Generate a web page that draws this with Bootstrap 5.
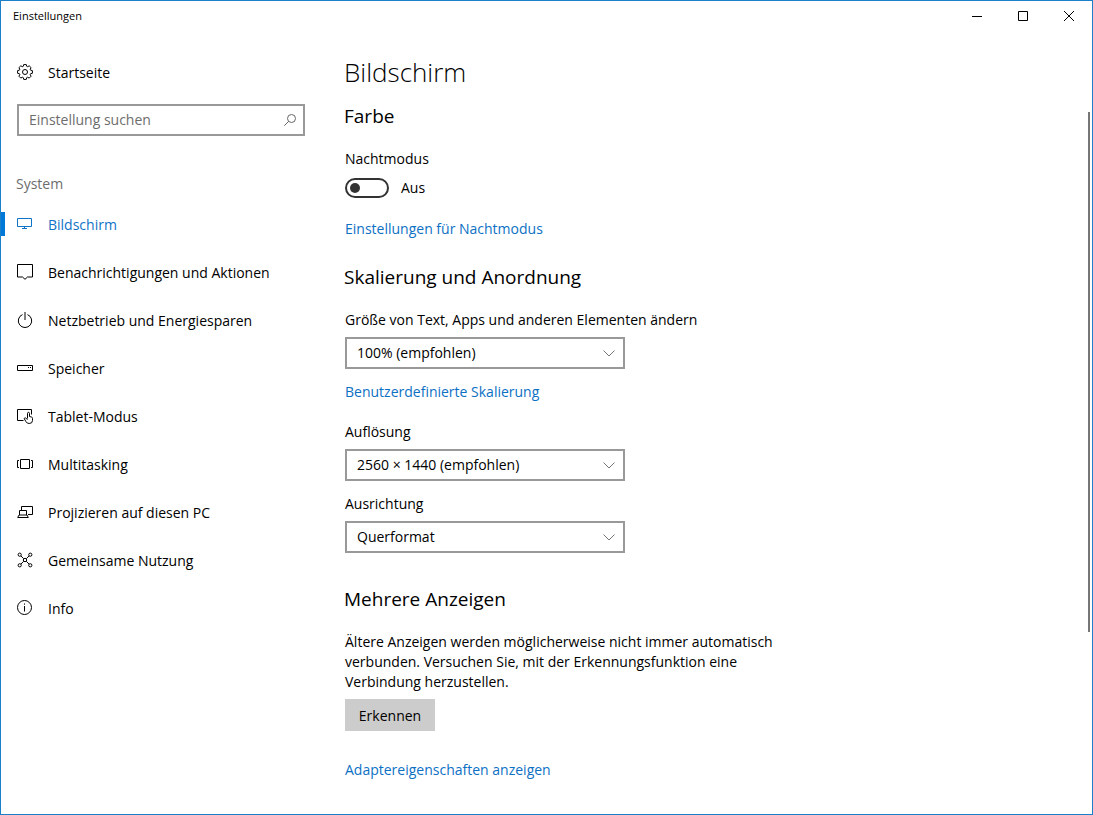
<!DOCTYPE html>
<html lang="de">
<head>
<meta charset="utf-8">
<meta name="viewport" content="width=device-width, initial-scale=1">
<title>Einstellungen</title>
<link href="https://cdn.jsdelivr.net/npm/bootstrap@5.3.0/dist/css/bootstrap.min.css" rel="stylesheet">
<style>
  :root { --accent: #0078d7; --link: #0c70c4; --edge: #999; }
  body { font-family: "Segoe UI", "Open Sans", "Noto Sans", sans-serif; font-size: 14px; line-height: 20px; color: #000; background: #fff; }
  svg { display: block; flex: none; fill: none; stroke: currentColor; }
  .window { border: 1px solid #1b7fc9; }
  .titlebar { height: 30px; margin-bottom: 1px; font-size: 11px; }
  .caption-btn { width: 46px; border: 0; background: none; color: #000; }
  .caption-btn:hover { background: #e5e5e5; }
  .sidebar { width: 320px; }
  .side-link { height: 48px; gap: 15px; padding: 2px 16px 0; color: #000; border-radius: 0; }
  .side-link svg { margin-bottom: 2px; }
  .side-link:hover { color: #000; background: #f2f2f2; }
  .side-link.active { color: #0f73c8; background: linear-gradient(var(--accent), var(--accent)) left center / 4px 24px no-repeat; }
  .search-box { height: 32px; margin: 8px 16px 32px; border: 2px solid var(--edge); }
  .search-box input { font-size: 14px; padding: 0 10px; border: 0; background: none; color: #000; }
  .search-box input::placeholder { color: #6d6d6d; opacity: 1; }
  .search-box button { width: 26px; border: 0; background: none; color: #666; padding: 0; }
  .group-name { line-height: 32px; padding: 0 15px; margin: 0; color: #6d6d6d; }
  .content { padding: 16px 24px; }
  h1, h2 { font-weight: 400; margin-left: -1px; }
  h1 { font-size: 26px; line-height: 48px; margin-bottom: 6px; font-weight: 300; }
  h2 { font-size: 19px; line-height: 28px; margin-bottom: 19px; }
  .color-section { margin-bottom: 24px; }
  .layout-section { margin-bottom: 32px; }
  .setting { margin-bottom: 13px; }
  .setting label { display: block; margin-bottom: 7px; }
  .setting .form-select { width: 280px; max-width: 100%; height: 32px; padding: 0 32px 0 10px; font-size: 14px; line-height: 20px; color: #000; border: 2px solid var(--edge); border-radius: 0;
    background: #fff url("data:image/svg+xml,%3Csvg xmlns='http://www.w3.org/2000/svg' viewBox='0 0 12 7'%3E%3Cpath d='M.5.5 6 6 11.5.5' fill='none' stroke='%23777'/%3E%3C/svg%3E") right 8px center / 12px 7px no-repeat; }
  .action-link { color: var(--link); text-decoration: none; }
  .scale-link { margin-bottom: 20px; }
  .switch-label { display: block; margin-bottom: 9px; }
  .toggle-row { padding: 0; margin: 0 0 21px; min-height: 0; gap: 12px; }
  .toggle-row .form-check-input { width: 44px; height: 20px; margin: 0; float: none; border: 2px solid #333; border-radius: 10px;
    background: url("data:image/svg+xml,%3Csvg xmlns='http://www.w3.org/2000/svg' viewBox='0 0 10 10'%3E%3Ccircle cx='5' cy='5' r='5' fill='%23333'/%3E%3C/svg%3E") left 3px center / 10px 10px no-repeat; }
  .toggle-row .form-check-input:checked { background-color: #fff; background-position: right 3px center; }
  .info-text { max-width: 448px; margin-bottom: 7px; }
  .flat-btn { display: block; width: 90px; height: 32px; padding: 0; border: 0; border-radius: 0; background: #ccc; color: #000; font-size: 14px; margin-bottom: 29px; }
  .scroll-track { width: 2px; margin: 80px 2px 0 0; }
  .scroll-thumb { flex: 520 0 0; background: #767676; }
  .scroll-rest { flex: 182 0 0; }
</style>
</head>
<body>
<div class="window d-flex flex-column min-vh-100">
  <header class="titlebar d-flex align-items-stretch">
    <span class="flex-grow-1 align-self-center ps-2 ms-1">Einstellungen</span>
    <button class="caption-btn d-flex align-items-center justify-content-center" type="button" aria-label="Minimieren"><svg width="10" height="10"><path d="M0 5.5h10"/></svg></button>
    <button class="caption-btn d-flex align-items-center justify-content-center" type="button" aria-label="Maximieren"><svg width="10" height="10"><path d="M.5.5h9v9h-9z"/></svg></button>
    <button class="caption-btn d-flex align-items-center justify-content-center" type="button" aria-label="Schließen"><svg width="10" height="10"><path d="M0 0l10 10M10 0L0 10"/></svg></button>
  </header>

  <div class="d-flex flex-grow-1">
    <aside class="sidebar flex-shrink-0 pt-3">
      <a class="side-link nav-link d-flex align-items-center" href="#">
        <svg width="16" height="16" viewBox="0 0 16 16"><path d="M6.7.6h2.6l.4 1.7 1 .4 1.5-.9 1.9 1.9-.9 1.5.4 1 1.8.4v2.7l-1.8.4-.4 1 .9 1.5-1.9 1.9-1.5-.9-1 .4-.4 1.8H6.7l-.4-1.8-1-.4-1.5.9-1.9-1.9.9-1.5-.4-1L.6 9.300V6.600l1.800-.4.4-1-.9-1.500 1.900-1.900 1.500.9 1-.4z"/><circle cx="8" cy="8" r="2.500"/></svg>
        Startseite
      </a>
      <form class="search-box d-flex" role="search">
        <input class="flex-grow-1" type="text" placeholder="Einstellung suchen" aria-label="Einstellung suchen">
        <button class="d-flex align-items-center justify-content-center" type="submit" aria-label="Suchen"><svg width="12" height="12"><circle cx="7.500" cy="4.500" r="4"/><path d="M4.700 7.300L.3 11.700"/></svg></button>
      </form>
      <p class="group-name">System</p>
      <nav class="nav flex-column flex-nowrap">
        <a class="side-link nav-link active d-flex align-items-center" href="#" aria-current="page"><svg width="16" height="16"><path d="M.5 2.500h14v8H.5zM7.500 10.500v2M5 12.500h5"/></svg>Bildschirm</a>
        <a class="side-link nav-link d-flex align-items-center" href="#"><svg width="16" height="16"><path d="M.5.5h15v12.500h-5L8 15.300 5.500 13h-5z"/></svg>Benachrichtigungen und Aktionen</a>
        <a class="side-link nav-link d-flex align-items-center" href="#"><svg width="16" height="16"><path d="M5.500 2.600a6.700 6.700 0 1 0 5 0M8 0v8"/></svg>Netzbetrieb und Energiesparen</a>
        <a class="side-link nav-link d-flex align-items-center" href="#"><svg width="16" height="16"><path d="M.5 5.500h15v5H.5zM11 7.500h1M13 7.500h1"/></svg>Speicher</a>
        <a class="side-link nav-link d-flex align-items-center" href="#"><svg width="16" height="16"><path d="M6.500 12.500h-6v-11h14v5"/><path d="M10.500 10.500V5.300c0-1.300 2-1.300 2 0v3.200l2.200.6q.8.3.8 1.200v2.200q0 3-3.300 3-2.200 0-3.200-1.800L7.400 11c-.5-1 .6-1.600 1.300-.9l1.800 1.400"/></svg>Tablet-Modus</a>
        <a class="side-link nav-link d-flex align-items-center" href="#"><svg width="16" height="16"><path d="M3.500 3.500h9v9h-9zM2 4.500H.5v7H2M14 4.500h1.500v7H14"/></svg>Multitasking</a>
        <a class="side-link nav-link d-flex align-items-center" href="#"><svg width="16" height="16"><path d="M4.500 6V2.500h11v8H11M2.500 11V6.500h7V11M.7 13.500l1.300-2.500h8l1.300 2.500z"/></svg>Projizieren auf diesen PC</a>
        <a class="side-link nav-link d-flex align-items-center" href="#"><svg width="16" height="16"><circle cx="2.700" cy="2.700" r="1.600"/><circle cx="13.300" cy="2.700" r="1.600"/><circle cx="2.700" cy="13.300" r="1.600"/><circle cx="13.300" cy="13.300" r="1.600"/><circle cx="8" cy="8" r="1.700"/><path d="M4 4l2.700 2.700M12 4L9.300 6.700M4 12l2.700-2.700M12 12L9.300 9.300"/></svg>Gemeinsame Nutzung</a>
        <a class="side-link nav-link d-flex align-items-center" href="#"><svg width="16" height="16"><circle cx="7.500" cy="7.500" r="7"/><path d="M7.500 6v5.500M7.500 3.500v1.200"/></svg>Info</a>
      </nav>
    </aside>

    <main class="content flex-grow-1">
      <h1>Bildschirm</h1>

      <section class="color-section">
        <h2>Farbe</h2>
        <label class="switch-label" for="night">Nachtmodus</label>
        <div class="toggle-row form-check form-switch d-flex align-items-center">
          <input class="form-check-input" type="checkbox" role="switch" id="night">
          <span>Aus</span>
        </div>
        <a class="action-link" href="#">Einstellungen für Nachtmodus</a>
      </section>

      <section class="layout-section">
        <h2>Skalierung und Anordnung</h2>
        <div class="setting">
          <label for="scale">Größe von Text, Apps und anderen Elementen ändern</label>
          <select class="form-select" id="scale"><option>100% (empfohlen)</option></select>
        </div>
        <a class="action-link scale-link d-block" href="#">Benutzerdefinierte Skalierung</a>
        <div class="setting">
          <label for="resolution">Auflösung</label>
          <select class="form-select" id="resolution"><option>2560 × 1440 (empfohlen)</option></select>
        </div>
        <div class="setting">
          <label for="orientation">Ausrichtung</label>
          <select class="form-select" id="orientation"><option>Querformat</option></select>
        </div>
      </section>

      <section>
        <h2>Mehrere Anzeigen</h2>
        <p class="info-text">Ältere Anzeigen werden möglicherweise nicht immer automatisch verbunden. Versuchen Sie, mit der Erkennungsfunktion eine Verbindung herzustellen.</p>
        <button class="flat-btn btn" type="button">Erkennen</button>
        <a class="action-link" href="#">Adaptereigenschaften anzeigen</a>
      </section>
    </main>

    <div class="scroll-track d-flex flex-column flex-shrink-0" aria-hidden="true">
      <div class="scroll-thumb"></div>
      <div class="scroll-rest"></div>
    </div>
  </div>
</div>
<script src="https://cdn.jsdelivr.net/npm/bootstrap@5.3.0/dist/js/bootstrap.bundle.min.js"></script>
</body>
</html>
